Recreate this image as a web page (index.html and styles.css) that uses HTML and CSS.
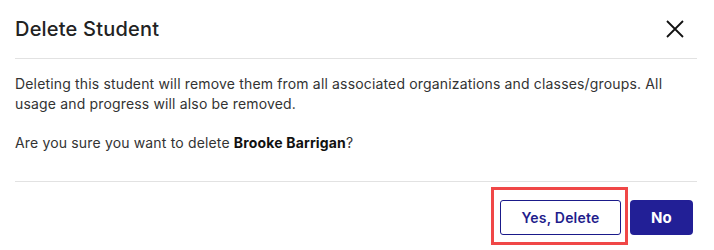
FILE: index.html
```html
<!DOCTYPE html>
<html lang="en">
<head>
<meta charset="utf-8">
<title>Delete Student</title>
<link rel="stylesheet" href="styles.css">
</head>
<body>
<div class="dialog">
  <div class="header">
    <h2 class="title">Delete Student</h2>
    <button class="close" aria-label="Close">
      <svg width="18" height="18" viewBox="0 0 18 18"><path d="M1 1 L17 17 M17 1 L1 17" stroke="#111" stroke-width="1.8" fill="none"/></svg>
    </button>
  </div>
  <div class="body">
    <p class="text">Deleting this student will remove them from all associated organizations and classes/groups. All usage and progress will also be removed.</p>
    <p class="text question">Are you sure you want to delete <strong>Brooke Barrigan</strong>?</p>
  </div>
  <div class="footer">
    <div class="highlight-wrap">
      <button class="btn btn-outline">Yes, Delete</button>
      <span class="highlight"></span>
    </div>
    <button class="btn btn-primary">No</button>
  </div>
</div>
</body>
</html>
```
FILE: styles.css
```css
* { box-sizing: border-box; }
html, body { margin: 0; padding: 0; background: #fff; }
body { font-family: Inter, "Open Sans", sans-serif; color: #333; }
.dialog { width: 714px; height: 250px; background: #fff; }
.header {
  display: flex;
  align-items: center;
  justify-content: space-between;
  height: 59px;
  margin: 0 17px 0 15px;
  border-bottom: 1px solid #e2e2e2;
}
.title { margin: 0; font-size: 20px; font-weight: 500; letter-spacing: 0.2px; color: #222; padding-bottom: 1px; }
.close { background: none; border: 0; padding: 0; margin-right: 13px; width: 18px; height: 18px; display: flex; }
.body { margin: 0 17px 0 15px; padding: 15px 0 28px; border-bottom: 1px solid #e2e2e2; }
.text { margin: 0; font-size: 14px; line-height: 20px; letter-spacing: 0.16px; color: #333; }
.question { margin-top: 19px; }
.question strong { color: #111; font-weight: 700; }
.footer { display: flex; justify-content: flex-end; gap: 9px; padding: 18px 21px 0 0; }
.highlight-wrap { position: relative; display: flex; }
.btn {
  height: 35px;
  border-radius: 4px;
  font-family: Inter, "Open Sans", sans-serif;
  font-size: 14px;
  font-weight: 600;
  letter-spacing: 0.2px;
  cursor: pointer;
}
.btn-outline { width: 121px; background: #fff; color: #1f1d8c; border: 1px solid #1a1a8a; border-radius: 3px; }
.btn-primary { width: 63px; background: #221f96; color: #fff; border: 0; font-weight: 700; font-size: 15px; }
.highlight {
  position: absolute;
  left: -9px;
  top: -13px;
  width: 137px;
  height: 58px;
  border: 3px solid #f04747;
  pointer-events: none;
}
```
